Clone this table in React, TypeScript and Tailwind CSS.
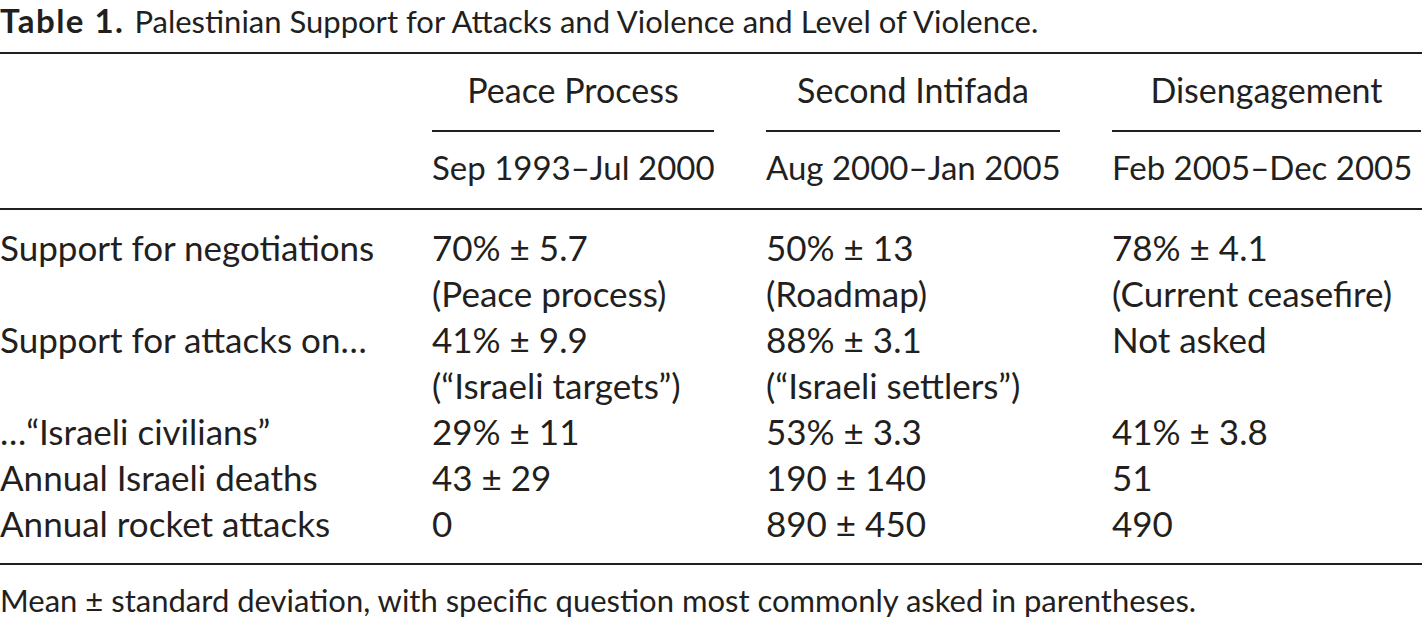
import React from 'react';

// Table 1 from the paper, rendered as a typeset table
const font = "font-['Lato','Open_Sans',sans-serif]";

const periods = [
  { name: 'Peace Process', range: 'Sep 1993–Jul 2000' },
  { name: 'Second Intifada', range: 'Aug 2000–Jan 2005' },
  { name: 'Disengagement', range: 'Feb 2005–Dec 2005' },
];

const rows: { label: string; cells: string[][] }[] = [
  {
    label: 'Support for negotiations',
    cells: [
      ['70% ± 5.7', '(Peace process)'],
      ['50% ± 13', '(Roadmap)'],
      ['78% ± 4.1', '(Current ceasefire)'],
    ],
  },
  {
    label: 'Support for attacks on…',
    cells: [
      ['41% ± 9.9', '(“Israeli targets”)'],
      ['88% ± 3.1', '(“Israeli settlers”)'],
      ['Not asked'],
    ],
  },
  { label: '…“Israeli civilians”', cells: [['29% ± 11'], ['53% ± 3.3'], ['41% ± 3.8']] },
  { label: 'Annual Israeli deaths', cells: [['43 ± 29'], ['190 ± 140'], ['51']] },
  { label: 'Annual rocket attacks', cells: [['0'], ['890 ± 450'], ['490']] },
];

const grid = 'grid grid-cols-[380px_282px_294px_309px] gap-x-[52px]';

export default function App() {
  return (
    <div className={`${font} w-[1422px] bg-white text-[#231f20] text-[35px]`}>
      <div className="leading-[40px] whitespace-nowrap text-[31px]">
        <span className="font-bold text-[33px] tracking-[1.5px]">Table 1.</span>{' '}
        <span className="ml-[2px]">Palestinian Support for Attacks and Violence and Level of Violence.</span>
      </div>

      <div className="mt-[11px] h-[2px] bg-[#231f20]" />

      {/* column headings */}
      <div className={`${grid} pt-[13px] leading-[46px] text-[34px]`}>
        <div />
        {periods.map((p) => (
          <div key={p.name} className="text-center whitespace-nowrap">
            {p.name}
          </div>
        ))}
      </div>
      <div className={`${grid} mt-[17px]`}>
        <div />
        {periods.map((p) => (
          <div key={p.name} className="h-[2px] bg-[#231f20]" />
        ))}
      </div>
      <div className={`${grid} mt-[12px] leading-[46px] text-[33px]`}>
        <div />
        {periods.map((p) => (
          <div key={p.name} className="whitespace-nowrap">
            {p.range}
          </div>
        ))}
      </div>

      <div className="mt-[18px] h-[2px] bg-[#231f20]" />

      {/* body */}
      <div className={`${grid} pt-[14px] leading-[46px]`}>
        {rows.map((r) => (
          <React.Fragment key={r.label}>
            <div className="whitespace-nowrap">{r.label}</div>
            {r.cells.map((c, i) => (
              <div key={i} className="whitespace-nowrap">
                {c.map((line) => (
                  <div key={line}>{line}</div>
                ))}
              </div>
            ))}
          </React.Fragment>
        ))}
      </div>

      <div className="mt-[17px] h-[2px] bg-[#231f20]" />

      <div className="mt-[12px] leading-[46px] whitespace-nowrap text-[31px]">
        Mean ± standard deviation, with specific question most commonly asked in parentheses.
      </div>
    </div>
  );
}
